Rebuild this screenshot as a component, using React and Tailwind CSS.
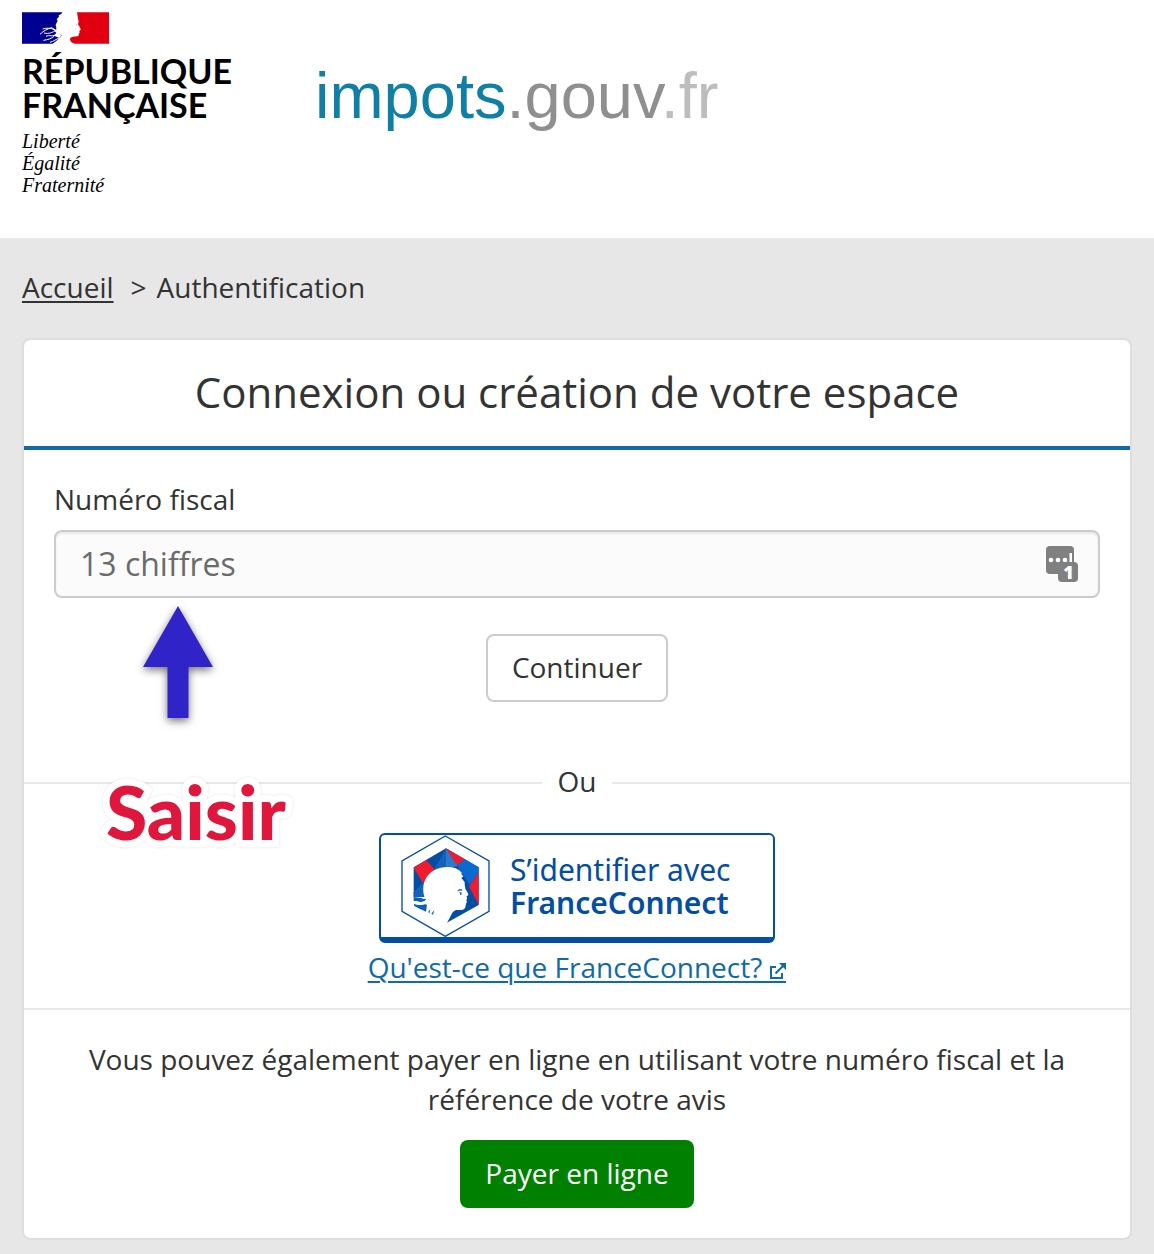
import { useState } from "react";

function Flag() {
  return (
    <svg viewBox="0 0 261 94" className="w-[87px] h-8" aria-hidden="true">
      <path
        fill="#000091"
        d="M0 0h121l-3 5-8 4 1 4-7 8 3 4-6 12 2 10-1 8 9 8 9 6-8 9-12 10-8 6H0z"
      />
      <path
        fill="#e1000f"
        d="M165 0h96v94H158l-10-4-4-8 1-6 8-3 14-1 4-4-1-4 3-3-1-5 4-4-1-4-7-12 2-9-2-8z"
      />
      <path
        fill="none"
        stroke="#fff"
        strokeWidth="3"
        d="M54 66c10-10 22-17 36-20M62 50c12-4 24-3 36 2M66 62c14 4 26-2 36-8M72 72c10-6 20 4 34-8M64 84c14-2 22-4 32-12M84 90c10-2 18-10 30-14"
      />
      <path fill="#fff" d="M88 44l20 12 11 14-8 6-16-6 8-8z" />
      <path fill="none" stroke="#9a9ab0" strokeWidth="2" d="M162 36l5-1m-4 4l3 2" />
    </svg>
  );
}

function FranceConnectIcon() {
  return (
    <svg viewBox="35 28 267 306" className="w-[89px] h-[102px] shrink-0" aria-hidden="true">
      <path
        fill="#fff"
        stroke="#034ea2"
        strokeWidth="4"
        d="M168 31l131 75v151l-131 75-130-75V106z"
      />
      <path fill="#034ea2" d="M170 68l98 57v113l-98 55-97-55V125z" />
      <path fill="#ee1c2e" d="M73 126l38-23 31 36-36 42z" />
      <path fill="#1461b8" d="M73 200l32-34v50l-32-2z" />
      <path fill="#1461b8" d="M170 68l-34 62h34z" />
      <path fill="#2a7bd0" d="M170 68v62l38-10z" />
      <path fill="#ee1c2e" d="M170 68l57 33-25 18z" />
      <path fill="#0a6ad2" d="M227 101l41 24v16l-27 37-38-59z" />
      <path fill="#ee1c2e" d="M268 140v98l-29-56z" />
      <path
        fill="#fff"
        d="M105 214c-5-18-4-34 0-46 6-16 16-27 30-35 20-10 44-12 62-6 10 3 14 9 20 13-2 3 0 8 5 12l-6 5 10 12c-1 7 2 16 2 20l9 16c1 3-2 5-5 6l1 8-2 5 2 5c-4 4-3 9-5 16-2 8-12 9-22 8-12-1-17 7-22 18l-14 26L68 242v-28z"
      />
      <path fill="#0c5fb8" d="M73 214l18 2c8 1 12 6 20 3-4 10-12 12-22 9-6-2-10-2-16-1z" />
      <path
        fill="#0c5fb8"
        d="M74 234c9-2 16 4 25 3 7-1 10-3 14 1-2 7-1 12-3 20-12-7-24-10-36-18zM117 258l6-8-3 14zM126 264l9-11-4 14z"
      />
      <path fill="#fff" d="M72 226c16 5 28 4 40-4l2 8c-12 9-25 11-42 4z" />
      <path fill="#034ea2" d="M204 195c6-5 10-5 15-3l-1 3c-5-1-9-1-13 2zM208 201l9-1-1 8-4-1 1-4z" />
    </svg>
  );
}

function PasswordIcon() {
  return (
    <svg viewBox="0 0 32 36" className="w-8 h-9 shrink-0 overflow-visible" aria-hidden="true">
      <rect width="28" height="28" rx="4" fill="#808080" />
      <circle cx="5" cy="14" r="2.3" fill="#fff" />
      <circle cx="12" cy="14" r="2.3" fill="#fff" />
      <circle cx="19" cy="14" r="2.3" fill="#fff" />
      <rect x="23.5" y="7" width="2.5" height="11" fill="#fff" />
      <rect x="12" y="16" width="20" height="20" rx="4" fill="#808080" />
      <text
        x="22.5"
        y="33"
        textAnchor="middle"
        fill="#fff"
        fontSize="18"
        fontWeight="800"
        fontFamily="Open Sans, sans-serif"
      >
        1
      </text>
    </svg>
  );
}

// the bottom bar carries the link underline on under the icon
function ExternalIcon() {
  return (
    <svg viewBox="0 0 24 20" className="inline-block w-6 h-5 align-[-5px]" aria-hidden="true">
      <path fill="none" stroke="#0f6aa8" strokeWidth="2" d="M14 4H9v11h11v-5M13.500 10.500L22 2" />
      <path fill="#0f6aa8" d="M17 0h7v7zM0 18h24v2H0z" />
    </svg>
  );
}

function Header() {
  return (
    <header className="flex items-start bg-white h-[238px] pt-3 px-[22px]">
      <div className="w-[293px] shrink-0">
        <Flag />
        <div className="mt-2.5 font-['Lato'] font-bold text-[34px] leading-[34px] text-black">
          RÉPUBLIQUE
          <br />
          FRANÇAISE
        </div>
        <div className="mt-2 font-['Liberation_Serif'] italic text-[20px] leading-[22px] text-black">
          Liberté
          <br />
          Égalité
          <br />
          Fraternité
        </div>
      </div>
      <div className="mt-[44px] font-['Liberation_Sans'] text-[65px] leading-[80px] whitespace-nowrap text-[#8f8f8f]">
        <span className="text-[#107fa6]">impots</span>.gouv
        <span className="text-[#bdbdbd]">.fr</span>
      </div>
    </header>
  );
}

function App() {
  const [numero, setNumero] = useState("");

  return (
    <div className="min-h-screen bg-[#e7e7e7] pb-3.5 font-['Open_Sans',sans-serif] text-[28px] leading-10 text-[#333]">
      <Header />

      <nav className="flex px-[22px] pt-[29px] pb-[31px]">
        <a href="#accueil" className="underline decoration-2 underline-offset-3">
          Accueil
        </a>
        <span className="ml-[17px] mr-2.5">&gt;</span>
        <span>Authentification</span>
      </nav>

      <main className="relative mx-[22px] bg-white bg-clip-padding border-2 border-[#dedede] rounded-lg text-center">
        <h1 className="pt-[29px] pb-[31px] border-b-4 border-[#1569a6] text-[42px] leading-[46px]">
          Connexion ou création de votre espace
        </h1>

        {/* FORM */}
        <form className="px-[30px] pt-[29px]" onSubmit={(e) => e.preventDefault()}>
          <label htmlFor="numero" className="block text-left mb-[11px]">
            Numéro fiscal
          </label>
          <div className="flex items-center h-[68px] pl-6 pr-5 bg-[#fbfbfb] border-2 border-[#ccc] rounded-lg shadow-[inset_0_2px_2px_rgba(0,0,0,0.08)]">
            <input
              id="numero"
              type="text"
              placeholder="13 chiffres"
              value={numero}
              onChange={(e) => setNumero(e.target.value)}
              className="flex-1 min-w-0 bg-transparent outline-none text-[32px] placeholder:text-[#6b6b6b]"
            />
            <PasswordIcon />
          </div>
          <button
            type="submit"
            className="mt-9 h-[68px] px-6 pb-0.5 bg-white border-2 border-[#ccc] rounded-lg"
          >
            Continuer
          </button>
        </form>

        <div className="flex items-center gap-4 mt-[59px]">
          <div className="flex-1 h-0.5 bg-[#e7e7e7]" />
          <span className="pb-1">Ou</span>
          <div className="flex-1 h-0.5 bg-[#e7e7e7]" />
        </div>

        {/* FRANCECONNECT */}
        <section className="flex flex-col items-center pt-7 pb-[21px] border-b-2 border-[#e7e7e7]">
          <button className="flex items-center gap-5 w-[396px] h-[110px] pl-5 border-2 border-b-[6px] border-[#034ea2] rounded-md text-left text-[#034ea2] font-['Noto_Sans'] text-[30px] leading-[33px]">
            <FranceConnectIcon />
            <span className="whitespace-nowrap">
              S’identifier avec
              <br />
              <span className="font-semibold">FranceConnect</span>
            </span>
          </button>
          <a
            href="#franceconnect"
            className="mt-1 h-10 text-[#0f6aa8] underline decoration-2 underline-offset-3"
          >
            Qu'est-ce que FranceConnect?
            <ExternalIcon />
          </a>
        </section>

        {/* PAYMENT */}
        <section className="px-[30px] pt-[29px] pb-[30px]">
          <p>
            Vous pouvez également payer en ligne en utilisant votre numéro fiscal et la référence
            de votre avis
          </p>
          <button className="mt-[21px] h-[68px] px-[25px] pb-0.5 bg-[#008000] text-white rounded-lg">
            Payer en ligne
          </button>
        </section>

        {/* arrow and note laid over the form */}
        <svg
          viewBox="0 0 70 112"
          className="absolute left-[119px] top-[266px] w-[70px] h-28 drop-shadow-[0_3px_4px_rgba(0,0,0,0.55)]"
          aria-hidden="true"
        >
          <path fill="#3023c8" d="M35 0l35 61H45.500v51h-21V61H0z" />
        </svg>
        <div className="absolute left-[82px] top-[431px] font-['Lato'] font-black text-[75px] leading-[80px] text-[#e0173c] [-webkit-text-stroke:14px_white] [paint-order:stroke_fill] drop-shadow-[0_0_1px_rgba(0,0,0,0.12)]">
          Saisir
        </div>
      </main>
    </div>
  );
}

export default App;
